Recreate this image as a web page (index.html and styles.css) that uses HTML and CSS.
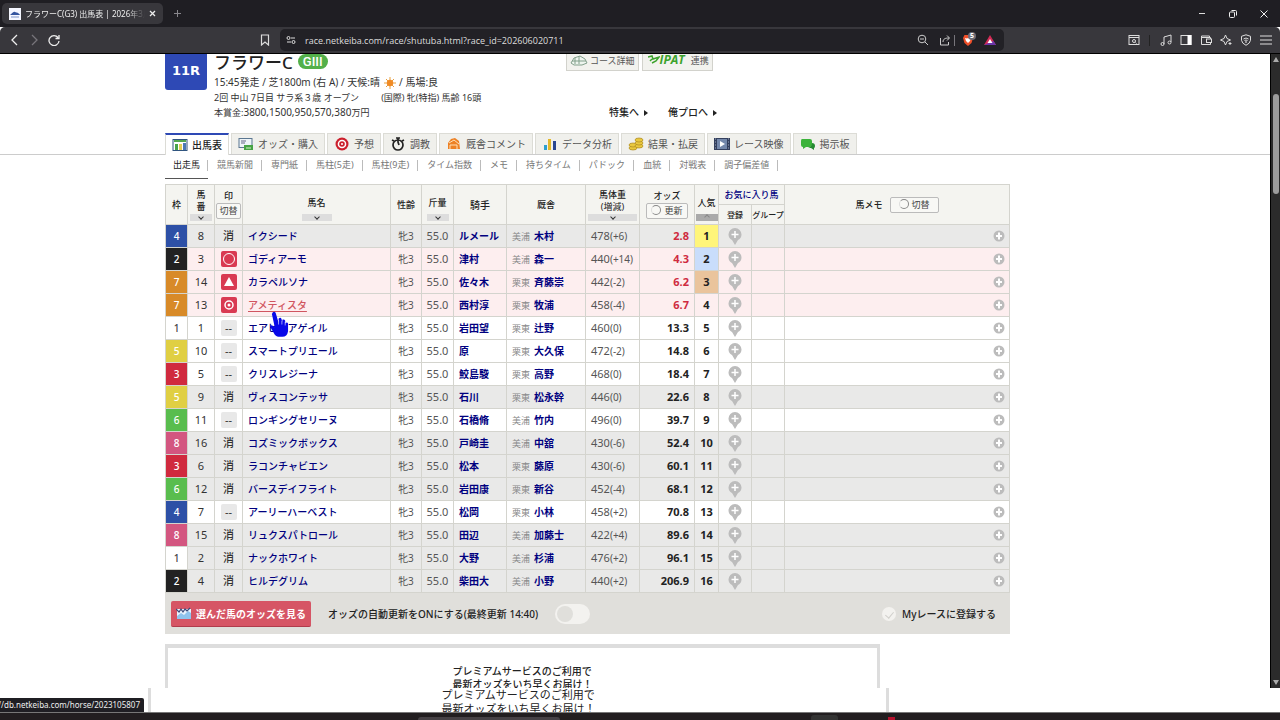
FILE: index.html
```html
<!DOCTYPE html>
<html lang="ja">
<head>
    <meta charset="utf-8">
    <title>フラワーC(G3) 出馬表 | 2026年3月</title>
    <link rel="stylesheet" href="styles.css">
</head>
<body>
    <!-- the browser tab strip -->
    <div class="tabstrip">
        <div class="tab">
            <svg class="favicon" viewBox="0 0 12 12"><rect width="12" height="12" fill="#f4f6ff"/><path d="M1 7c2-1 3-4 5-3s3 0 5 3z" fill="#33549f"/><path d="M2 9h8" stroke="#7d93c7"/></svg>
            <span class="tab-title">フラワーC(G3) 出馬表 | 2026年3月</span>
            <button class="plain" aria-label="閉じる"><svg width="7" height="7" viewBox="0 0 7 7"><path d="M1 1l5 5M6 1L1 6" stroke="#eee" stroke-width="1.3"/></svg></button>
        </div>
        <button class="plain new-tab" aria-label="新しいタブ"><svg width="9" height="9" viewBox="0 0 9 9"><path d="M4.5 1v7M1 4.5h7" stroke="#88868c"/></svg></button>
        <div class="window-buttons">
            <button class="plain" aria-label="最小化"><svg width="10" height="10" viewBox="0 0 10 10"><path d="M2 4.500h6" stroke="#ddd"/></svg></button>
            <button class="plain" aria-label="元に戻す"><svg width="10" height="10" viewBox="0 0 10 10" fill="none" stroke="#eee"><rect x="1.5" y="3" width="5" height="5.5" rx="1"/><path d="M3.5 1.5h4q1 0 1 1v4"/></svg></button>
            <button class="plain" aria-label="ウィンドウを閉じる"><svg width="10" height="10" viewBox="0 0 10 10"><path d="M1.500 1.500l7 7M8.500 1.500l-7 7" stroke="#eee"/></svg></button>
        </div>
    </div>

    <!-- the toolbar -->
    <div class="toolbar">
        <div class="nav-buttons">
            <button class="plain" aria-label="戻る"><svg width="12" height="12" viewBox="0 0 12 12" fill="none" stroke="#eee" stroke-width="1.3"><path d="M9 1L4 6l5 5"/></svg></button>
            <button class="plain" aria-label="進む"><svg width="12" height="12" viewBox="0 0 12 12" fill="none" stroke="#77757b" stroke-width="1.3"><path d="M4 1l5 5-5 5"/></svg></button>
            <button class="plain" aria-label="再読み込み"><svg width="12" height="12" viewBox="0 0 12 12" fill="none" stroke="#eee" stroke-width="1.3"><path d="M10 3.500A5 5 0 1 0 11 7M11 1v3.500H7.500"/></svg></button>
        </div>
        <button class="plain bookmark" aria-label="ブックマーク"><svg width="10" height="12" viewBox="0 0 10 12" fill="none" stroke="#ddd" stroke-width="1.2"><path d="M1.500 1h7v10L5 8l-3.500 3z"/></svg></button>
        <div class="address">
            <svg width="10" height="10" viewBox="0 0 10 10" fill="none" stroke="#ddd"><circle cx="2.500" cy="3" r="1.500"/><path d="M5 3h4M1 7h4"/><circle cx="7.500" cy="7" r="1.500"/></svg>
            <input type="text" class="url" aria-label="アドレス" value="race.netkeiba.com/race/shutuba.html?race_id=202606020711">
            <svg width="12" height="12" viewBox="0 0 12 12" fill="none" stroke="#ccc"><circle cx="5" cy="5" r="3.800"/><path d="M3 5h4M8 8l3 3"/></svg>
            <svg class="share" width="12" height="12" viewBox="0 0 12 12" fill="none" stroke="#ccc"><path d="M1.500 4v7h8V8M4 8c0-3 2-4 6-4M8 1.500L10.500 4 8 6.500"/></svg>
            <span class="divider"></span>
            <span class="shield">
                <svg width="12" height="12" viewBox="0 0 12 12"><path d="M2.500 1h7l1.500 3-1.500 5L6 12 2.500 9 1 4z" fill="#f0502a"/><path d="M3 4l2 .5L6 4l1 .5L9 4 8 7 6 9 4 7z" fill="#fff"/></svg>
                <span class="badge">5</span>
            </span>
            <svg width="12" height="10" viewBox="0 0 12 10"><path d="M6 0l6 10H0z" fill="#d12a55"/><path d="M0 10h12L9.500 6z" fill="#6a35a8"/><path d="M6 4l2.500 4h-5z" fill="#fff"/></svg>
        </div>
        <div class="tool-icons">
            <svg width="12" height="12" viewBox="0 0 12 12" fill="none" stroke="#ddd"><rect x="1" y="1.500" width="10" height="9"/><path d="M1 3.500h10M7.500 8.500l1 1"/><circle cx="6" cy="7" r="1.500"/></svg>
            <span class="divider dark"></span>
            <svg width="12" height="12" viewBox="0 0 12 12" fill="none" stroke="#ddd"><path d="M4 10V3l7-2v7"/><circle cx="2.500" cy="10" r="1.500"/><circle cx="9.500" cy="8.500" r="1.500"/></svg>
            <svg width="12" height="12" viewBox="0 0 12 12"><rect x="1" y="1.500" width="10" height="9" fill="none" stroke="#ddd"/><path d="M7.500 1h4v10h-4z" fill="#fff"/></svg>
            <svg width="12" height="12" viewBox="0 0 12 12" fill="none" stroke="#ddd"><path d="M10.500 5V3.500h-9V2h8v1.500M1.500 3v7.500h9V9"/><rect x="6.500" y="5" width="5" height="3.500"/></svg>
            <svg width="12" height="12" viewBox="0 0 12 12" fill="none" stroke="#ddd"><path d="M5.500 1L7 4.500 10.500 6 7 7.500 5.500 11 4 7.500.5 6 4 4.500zM10 8v3M8.500 9.500h3"/></svg>
            <svg width="12" height="12" viewBox="0 0 12 12" fill="none" stroke="#ddd"><path d="M6 .8l4.500 1.500v4Q10 9.500 6 11.300 2 9.500 1.500 6.300v-4z"/><path d="M3.500 5q2.500-2 5 0M4.500 6.500q1.500-1 3 0"/><circle cx="6" cy="8" r=".5"/></svg>
            <svg width="12" height="12" viewBox="0 0 12 12" stroke="#ddd" stroke-width="1.200"><path d="M0 2h12M0 6h12M0 10h12"/></svg>
        </div>
    </div>

    <!-- the web page -->
    <div class="viewport">
        <main class="page">
            <header class="race-head content">
                <div class="race-no">11R</div>
                <div class="race-info">
                    <h1>フラワーC<span class="grade">GIII</span></h1>
                    <p class="race-data">15:45発走 / 芝1800m (右 A) / 天候:晴
                        <svg width="12" height="12" viewBox="0 0 12 12"><path d="M6 0v12M0 6h12M2 2l8 8M10 2l-8 8" stroke="#e8a040"/><circle cx="6" cy="6" r="3.200" fill="#f08a24"/></svg>
                        / 馬場:良</p>
                    <p><span class="class-name">2回 中山 7日目 サラ系３歳 オープン</span><span>(国際) 牝(特指) 馬齢 16頭</span></p>
                    <p>本賞金:<span class="prize">3800,1500,950,570,380</span>万円</p>
                </div>
                <div class="race-links">
                    <div class="link-buttons">
                        <button><svg width="18" height="11" viewBox="0 0 18 11" fill="#eef5ef" stroke="#829f8b"><path d="M1 8l3-5 6-2 5 3 2 4-5 2H4z"/><path d="M5 3v6M9 1v8M2 6h14"/></svg>コース詳細</button>
                        <button><span class="ipat"><svg width="12" height="9" viewBox="0 0 12 9" fill="none" stroke="#3ca32c" stroke-width="1.500"><path d="M0 2l4-1 1 3 6-2-3 4-4 2M4 4L2 6"/></svg>IPAT</span>連携</button>
                    </div>
                    <div class="feature-links">
                        <a href="#">特集へ</a>
                        <a href="#">俺プロへ</a>
                    </div>
                </div>
            </header>

            <nav class="main-tabs">
                <a href="#" class="active"><svg viewBox="0 0 16 14"><rect x="1" y="1.500" width="14" height="11" fill="#fff" stroke="#30557f"/><path d="M2 2h12v2H2z" fill="#54a84f"/><path d="M3 6h3v6H3z" fill="#49a34a"/><path d="M7 6h3v6H7z" fill="#e4cf56"/><path d="M11 5h3v7h-3z" fill="#4d7ab5"/></svg>出馬表</a>
                <a href="#"><svg viewBox="0 0 16 14"><rect x="1" y="1.500" width="13" height="9" fill="#eef4f8" stroke="#5b7791"/><path d="M3 4h5M3 6h4" stroke="#668"/><path d="M6 8h9v5H6z" fill="#47a345"/><path d="M8 11h5" stroke="#d8f3c8"/></svg>オッズ・購入</a>
                <a href="#"><svg viewBox="0 0 16 14"><circle cx="8" cy="7" r="6.500" fill="#cc202d"/><circle cx="8" cy="7" r="4.300" fill="#fff"/><circle cx="8" cy="7" r="2.800" fill="#cc202d"/><circle cx="8" cy="7" r="1" fill="#fff"/></svg>予想</a>
                <a href="#"><svg viewBox="0 0 16 14" fill="none" stroke="#222" stroke-width="1.700"><circle cx="8" cy="8" r="5"/><path d="M8 1v4l1 3M6 1h4M2 3l2 1M14 3l-2 1"/></svg>調教</a>
                <a href="#"><svg viewBox="0 0 16 14"><path d="M2 12V6l3-4 4-1 4 3 1 8z" fill="#ed8125"/><path d="M4 12V8h7v4M3 6l5-3 5 4" fill="none" stroke="#ffe0b8"/></svg>厩舎コメント</a>
                <a href="#"><svg viewBox="0 0 16 14"><path d="M2 8h3v5H2z" fill="#2da0d0"/><path d="M6 2h3v11H6z" fill="#e3b82a"/><path d="M11 4h3v9h-3z" fill="#294690"/></svg>データ分析</a>
                <a href="#"><svg viewBox="0 0 16 14" fill="#e9c83e" stroke="#aa861e" stroke-width=".7"><ellipse cx="5" cy="11" rx="4" ry="2"/><ellipse cx="5" cy="8" rx="4" ry="2"/><ellipse cx="11" cy="9" rx="4" ry="2"/><ellipse cx="11" cy="6" rx="4" ry="2"/><ellipse cx="11" cy="3" rx="4" ry="2"/></svg>結果・払戻</a>
                <a href="#"><svg viewBox="0 0 16 14"><path d="M0 1h16v12H0z" fill="#34405e"/><path d="M3 2h10v10H3z" fill="#7488ab"/><path d="M6 4l5 3-5 3z" fill="#fff"/><path d="M1.500 1v12M14.500 1v12" stroke="#68738c" stroke-dasharray="2 1"/></svg>レース映像</a>
                <a href="#"><svg viewBox="0 0 16 14"><path d="M2 2h8q2 0 2 2v4q0 2-2 2H6l-3 2V10Q1 10 1 8V4q0-2 1-2z" fill="#3cb33b"/><path d="M12 6q3 0 3 3 0 2-1 2v2l-3-2H8q4-1 4-5z" fill="#268b32"/></svg>掲示板</a>
            </nav>
            <nav class="sub-tabs">
                <a href="#" class="active">出走馬</a>
                <a href="#">競馬新聞</a>
                <a href="#">専門紙</a>
                <a href="#">馬柱(5走)</a>
                <a href="#">馬柱(9走)</a>
                <a href="#">タイム指数</a>
                <a href="#">メモ</a>
                <a href="#">持ちタイム</a>
                <a href="#">パドック</a>
                <a href="#">血統</a>
                <a href="#">対戦表</a>
                <a href="#">調子偏差値</a>
            </nav>

            <section class="content">
                <table class="shutuba">
                    <colgroup>
                        <col class="c-waku"><col class="c-umaban"><col class="c-mark"><col class="c-name">
                        <col class="c-age"><col class="c-kinryo"><col class="c-jockey"><col class="c-stable">
                        <col class="c-weight"><col class="c-odds"><col class="c-rank"><col class="c-fav">
                        <col class="c-group"><col class="c-memo">
                    </colgroup>
                    <thead>
                        <tr>
                            <th rowspan="2">枠</th>
                            <th rowspan="2"><div class="head">馬<br>番<button class="sort" aria-label="馬番順"></button></div></th>
                            <th rowspan="2">印<br><button class="small-button">切替</button></th>
                            <th rowspan="2"><div class="head one">馬名<button class="sort wide" aria-label="馬名順"></button></div></th>
                            <th rowspan="2">性齢</th>
                            <th rowspan="2"><div class="head one">斤量<button class="sort" aria-label="斤量順"></button></div></th>
                            <th rowspan="2" class="large">騎手</th>
                            <th rowspan="2">厩舎</th>
                            <th rowspan="2"><div class="head">馬体重<br><span class="light">(増減)</span><button class="sort full" aria-label="馬体重順"></button></div></th>
                            <th rowspan="2">オッズ<br><button class="small-button refresh">更新</button></th>
                            <th rowspan="2"><div class="head one">人気<button class="sort on" aria-label="人気順"></button></div></th>
                            <th colspan="2"><a href="#">お気に入り馬</a></th>
                            <th rowspan="2"><div class="memo-head">馬メモ <button class="small-button refresh">切替</button></div></th>
                        </tr>
                        <tr>
                            <th class="tiny">登録</th>
                            <th class="tiny">グループ</th>
                        </tr>
                    </thead>
                    <tbody id="horses"></tbody>
                </table>

                <div class="table-foot">
                    <button class="odds-button">
                        <svg width="16" height="12" viewBox="0 0 16 12"><path d="M1 2h14v10H1z" fill="#e9f4ff"/><path d="M1 9l4-3 3 2 4-4 3 2v6H1z" fill="#8fc4ee"/><path d="M0 2l3 3 2-3 2 3 2-3 2 2 3-3" fill="none" stroke="#3d4c7c" stroke-width="1.200"/></svg>
                        選んだ馬のオッズを見る
                    </button>
                    <label class="auto-update">オッズの自動更新をONにする(最終更新 14:40)<input type="checkbox" class="switch"></label>
                    <label class="my-race"><input type="checkbox" class="round-check">Myレースに登録する</label>
                </div>

                <div class="premium">
                    <p>プレミアムサービスのご利用で<br>最新オッズをいち早くお届け！</p>
                </div>
            </section>
        </main>
        <div class="scrollbar">
            <span class="arrow up"></span>
            <span class="thumb"></span>
            <span class="arrow down"></span>
        </div>
    </div>

    <!-- the window behind -->
    <div class="behind">
        <div class="premium">
            <p>プレミアムサービスのご利用で<br>最新オッズをいち早くお届け！</p>
        </div>
    </div>
    <div class="taskbar"><span class="task"></span><span class="task short"></span><span class="alert"></span></div>

    <div class="status">s://db.netkeiba.com/horse/2023105807</div>
    <svg class="cursor" viewBox="0 0 20 28"><path d="M3 1q2-1 3 1l3 10V8q2-2 3 0l1 3V9q2-1 3 1v3q2-2 3 0v8q-1 6-6 6H9q-3 0-5-4l-4-7q1-3 5 1L2 3z" fill="#0808e8"/><path d="M9 9v5M12.500 10v4M16 11v4" stroke="#e8e8ff" stroke-width=".7"/></svg>

    <script src="shutuba.js"></script>
</body>
</html>
```
FILE: styles.css
```css
/* This is the style of the body element */
* {
    box-sizing: border-box;
}
body {
    margin: 0;
    height: 100vh;
    display: flex;
    flex-direction: column;
    overflow: hidden;
    background: white;
    color: #333;
    font-family: "Noto Sans", "Noto Sans CJK JP", sans-serif;
    font-size: 10px;
}
h1, p {
    margin: 0;
}
a {
    color: #00007f;
    text-decoration: none;
}
button, input {
    font-family: inherit;
    margin: 0;
}
.plain {
    display: flex;
    background: none;
    border: none;
    padding: 0;
}

/* Set up the style for the tab strip */
.tabstrip {
    flex: none;
    display: flex;
    align-items: center;
    height: 27px;
    padding: 0 11px 0 2px;
    background: #1f1e23;
}
.tab {
    display: flex;
    align-items: center;
    gap: 4px;
    width: 161px;
    height: 21px;
    padding: 0 7px;
    border-radius: 5px;
    background: #38373c;
    color: #eee;
}
.favicon {
    flex: none;
    width: 12px;
    height: 12px;
}
.tab-title {
    flex: 1;
    font-size: 8px;
    white-space: nowrap;
    overflow: hidden;
    -webkit-mask-image: linear-gradient(to right, black 85%, transparent);
}
.new-tab {
    margin-left: 10px;
}
.window-buttons {
    display: flex;
    gap: 21px;
    margin-left: auto;
}

/* Set up the style for the toolbar */
.toolbar {
    flex: none;
    display: flex;
    align-items: center;
    height: 27px;
    padding: 0 8px;
    background: #38373c;
    border-bottom: 1px solid black;
    border-radius: 5px 5px 0 0;
}
.nav-buttons {
    display: flex;
    gap: 8px;
}
.bookmark {
    margin-left: 200px;
}
.address {
    flex: 1;
    display: flex;
    align-items: center;
    height: 22px;
    margin-left: 10px;
    padding: 0 8px 0 6px;
    border-radius: 5px;
    background: #222126;
}
.url {
    flex: 1;
    margin-left: 9px;
    padding: 0;
    border: none;
    background: none;
    color: #ddd;
    font-family: "Open Sans", "Noto Sans", sans-serif;
    font-size: 9px;
}
.share {
    margin-left: 10px;
}
.divider {
    width: 1px;
    height: 11px;
    margin: 0 7px 0 3px;
    background: #77757b;
}
.divider.dark {
    margin: 0 2px 0 1px;
    background: #222;
}
.shield {
    display: flex;
    position: relative;
    margin-right: 10px;
}
.badge {
    position: absolute;
    left: 6px;
    top: -2px;
    width: 8px;
    border-radius: 4px;
    background: #6e6c75;
    color: white;
    font-size: 7px;
    font-weight: bold;
    line-height: 8px;
    text-align: center;
}
.tool-icons {
    display: flex;
    align-items: center;
    gap: 8px;
    margin-left: 124px;
}

/* Set up the style for the page area */
.viewport {
    flex: 1;
    min-height: 0;
    display: flex;
}
.page {
    flex: 1;
    overflow: hidden;
    white-space: nowrap;
}
.content {
    padding: 0 260px 0 165px;
}
.race-head {
    display: flex;
    height: 79px;
}
.race-no {
    width: 42px;
    height: 36px;
    border-radius: 0 0 3px 3px;
    background: #2e49b5;
    color: white;
    font-family: "DejaVu Sans", sans-serif;
    font-size: 13px;
    font-weight: bold;
    line-height: 34px;
    text-align: center;
}
.race-info {
    width: 352px;
    margin-left: 7px;
    line-height: 14px;
}
.race-info h1 {
    height: 20px;
    color: #222;
    font-size: 17px;
    font-weight: 500;
    line-height: 18px;
}
.grade {
    display: inline-block;
    margin-left: 5px;
    padding: 0 5px;
    border-radius: 8px;
    background: #53b04a;
    color: white;
    font-family: Roboto, sans-serif;
    font-size: 13px;
    line-height: 15px;
    vertical-align: top;
}
.race-info p {
    font-size: 9px;
}
.race-info .race-data {
    height: 17px;
    font-size: 10px;
    line-height: 16px;
}
.race-data svg {
    margin: 0 1px;
    vertical-align: middle;
}
.class-name {
    margin-right: 22px;
}
.prize {
    font-size: 10px;
}
.link-buttons {
    display: flex;
    gap: 3px;
}
.link-buttons button {
    display: flex;
    align-items: center;
    gap: 2px;
    height: 17px;
    padding: 0 3px 4px;
    border: 1px solid #d2d2cc;
    border-top: none;
    background: #f2f2ee;
    color: #555;
    font-size: 9px;
}
.ipat {
    display: flex;
    margin: 0 4px 0 2px;
    color: #3ca32c;
    font-family: "Open Sans", sans-serif;
    font-size: 12px;
    font-style: italic;
    font-weight: bold;
    line-height: 10px;
}
.feature-links {
    display: flex;
    gap: 20px;
    margin: 33px 0 0 43px;
}
.feature-links a {
    color: #222;
    font-weight: 500;
}
.feature-links a::after {
    content: "";
    display: inline-block;
    margin-left: 5px;
    border: 3px solid transparent;
    border-left: 4px solid #222;
    border-right: none;
}

/* Set up the style for the tabs */
.main-tabs {
    display: flex;
    gap: 2px;
    height: 22px;
    padding-left: 165px;
    border-bottom: 1px solid #ccc;
}
.main-tabs a {
    display: flex;
    align-items: center;
    gap: 4px;
    padding: 0 6px 1px;
    border: 1px solid #dcdcd6;
    border-bottom: none;
    background: #f0f0ec;
    color: #555;
}
.main-tabs svg {
    width: 16px;
    height: 14px;
}
.main-tabs .active {
    height: 22px;
    border-top: 2px solid #2e49b5;
    background: white;
    color: #222;
    font-weight: 500;
}
.sub-tabs {
    display: flex;
    height: 29px;
    padding-left: 165px;
}
.sub-tabs a {
    height: 24px;
    line-height: 20px;
    padding: 0 9px;
    color: #777;
    font-size: 9px;
    background: linear-gradient(#bbb, #bbb) no-repeat right 5px / 1px 11px;
}
.sub-tabs .active {
    padding: 0 8px;
    color: #222;
    border-bottom: 1px solid #555;
}

/* Set up the style for the table */
.shutuba {
    width: 100%;
    table-layout: fixed;
    border-collapse: collapse;
}
.c-waku { width: 22px; }
.c-umaban { width: 27px; }
.c-mark { width: 28px; }
.c-name { width: 148px; }
.c-age { width: 31px; }
.c-kinryo { width: 32px; }
.c-jockey { width: 53px; }
.c-stable { width: 79px; }
.c-weight { width: 54px; }
.c-odds { width: 55px; }
.c-rank { width: 24px; }
.c-fav { width: 33px; }
.c-group { width: 33px; }
.shutuba th, .shutuba td {
    padding: 0;
    border: 1px solid #d4d4ce;
    overflow: hidden;
}
.shutuba th {
    height: 20px;
    background: #f4f4f0;
    color: #222;
    font-size: 9px;
    font-weight: 500;
    line-height: 12px;
}
.shutuba .large {
    font-size: 10px;
}
.shutuba .tiny {
    font-size: 8px;
}
.light {
    font-weight: normal;
}
.head {
    display: flow-root;
    height: 39px;
    padding-top: 4px;
}
.one {
    padding-top: 12px;
}
.sort {
    display: block;
    width: 22px;
    height: 7px;
    margin: 1px auto 0;
    padding: 0 0 2px;
    border: none;
    background: #ddd;
}
.one .sort {
    margin-top: 5px;
}
.sort::before {
    content: "";
    display: block;
    width: 3px;
    height: 3px;
    margin: 0 auto;
    border: solid #333;
    border-width: 0 1px 1px 0;
    rotate: 45deg;
}
.wide {
    width: 30px;
}
.full {
    width: 49px;
}
.sort.on {
    background: #aaa;
}
.sort.on::before {
    border-color: #888;
    border-width: 1px 0 0 1px;
}
.small-button {
    height: 16px;
    margin-top: 1px;
    padding: 0 2px;
    border: 1px solid #bbb;
    border-radius: 2px;
    background: #f8f8f5;
    color: #444;
    font-size: 9px;
    line-height: 12px;
}
.refresh {
    padding: 0 4px;
}
.refresh::before {
    content: "";
    display: inline-block;
    width: 8px;
    height: 8px;
    margin-right: 3px;
    border: 1px solid #888;
    border-left-color: #ddd;
    border-radius: 50%;
    vertical-align: -1px;
}
.memo-head {
    display: flex;
    align-items: center;
    justify-content: center;
    gap: 7px;
}
.memo-head .refresh {
    padding: 0 8px;
}
.shutuba td {
    height: 23px;
    font-size: 11px;
    line-height: 16px;
    text-align: center;
}
.pick {
    background: #fdeeef;
}
.off {
    background: #e9e9e8;
}
.shutuba .name, .shutuba .jockey, .shutuba .stable, .shutuba .weight {
    padding-left: 5px;
    text-align: left;
}
.shutuba .name, .shutuba .jockey, .shutuba .stable {
    font-size: 10px;
    font-weight: 500;
}
.shutuba .jockey, .shutuba .stable {
    font-weight: bold;
}
.area {
    margin-right: 4px;
    color: #888;
    font-size: 9px;
    font-weight: normal;
}
.diff {
    font-size: 10px;
}
.shutuba .age {
    color: #555;
    font-size: 10px;
}
.shutuba .kinryo, .shutuba .weight {
    color: #555;
}
.name .hover {
    color: #d05560;
    text-decoration: underline;
    text-underline-offset: 2px;
}
.shutuba .odds {
    padding-right: 5px;
    color: #222;
    font-weight: bold;
    text-align: right;
}
.shutuba .low {
    color: #cf2b3f;
}
.shutuba .rank {
    color: #222;
    font-weight: bold;
}
.rank1 { background: #fff57a; }
.rank2 { background: #c9ddfb; }
.rank3 { background: #eac49c; }

.shutuba .waku {
    color: white;
    font-size: 10px;
    font-weight: 500;
}
.shutuba .waku1 { background: white; color: #444; }
.waku2 { background: #222; }
.waku3 { background: #d02a3e; }
.waku4 { background: #2d50a6; }
.waku5 { background: #e0cf43; }
.waku6 { background: #59bd4e; }
.waku7 { background: #d88a28; }
.waku8 { background: #d35680; }

/* Set up the style for the marks */
.mark {
    display: flex;
    align-items: center;
    justify-content: center;
    width: 16px;
    height: 16px;
    margin: 0 auto;
    padding: 0;
    border: none;
    border-radius: 2px;
    background: #e8e8e8;
    color: #333;
    font-size: 11px;
    line-height: 14px;
}
.chosen {
    background: #d93a52;
}
.erase {
    background: none;
    font-weight: 500;
}
.icon-button {
    display: flex;
    margin: 0 auto;
    padding: 0;
    border: none;
    background: none;
}
.memo .icon-button {
    margin: 0 4px 0 auto;
}

/* Set up the style below the table */
.table-foot {
    display: flex;
    align-items: center;
    height: 41px;
    padding: 0 14px 0 6px;
    background: #e0dfdb;
    color: #222;
    font-weight: 500;
}
.odds-button {
    display: flex;
    align-items: center;
    gap: 4px;
    height: 26px;
    padding: 0 5px;
    border: none;
    border-bottom: 1px solid #b03c4c;
    border-radius: 2px;
    background: #d65565;
    color: white;
    font-size: 10px;
    font-weight: bold;
}
.auto-update {
    display: flex;
    align-items: center;
    gap: 17px;
    margin-left: 17px;
}
.switch {
    appearance: none;
    width: 35px;
    height: 20px;
    padding: 2px;
    border-radius: 10px;
    background: #f3f2ef;
}
.switch::before {
    content: "";
    display: block;
    width: 16px;
    height: 16px;
    border-radius: 50%;
    background: #e0dfdb;
}
.my-race {
    display: flex;
    align-items: center;
    gap: 6px;
    margin-left: auto;
}
.round-check {
    appearance: none;
    width: 14px;
    height: 14px;
    padding: 3px 5px;
    border-radius: 50%;
    background: #f3f2ef;
}
.round-check::before {
    content: "";
    display: block;
    width: 4px;
    height: 7px;
    border: solid #d0cfcb;
    border-width: 0 1px 1px 0;
    rotate: 40deg;
}
.premium {
    width: 715px;
    max-width: 100%;
    margin-top: 10px;
    padding-top: 17px;
    border: 4px solid #ddd;
    border-width: 4px 3px 0;
    color: #222;
    font-weight: 500;
    line-height: 13px;
}
.premium p {
    width: max-content;
    margin: 0 auto;
}

/* Set up the style for the scrollbar */
.scrollbar {
    display: flex;
    flex-direction: column;
    align-items: center;
    width: 10px;
    padding: 3px 0;
    border-left: 1px solid black;
    background: #2b2b2b;
}
.arrow {
    border: 3px solid transparent;
}
.up {
    border-top: none;
    border-bottom: 5px solid #aaa;
}
.down {
    margin-top: auto;
    border-bottom: none;
    border-top: 5px solid #aaa;
}
.thumb {
    width: 6px;
    height: 100px;
    margin-top: 32px;
    border-radius: 3px;
    background: #9c9c9c;
}

/* Set up the style for the bottom of the screen */
.behind {
    flex: none;
    height: 24px;
    padding-left: 148px;
    overflow: hidden;
}
.behind .premium {
    width: 741px;
    margin: 0;
    padding: 0;
    border-width: 0 3px;
    font-size: 11px;
    font-weight: normal;
    line-height: 14px;
}
.taskbar {
    flex: none;
    display: flex;
    align-items: flex-end;
    height: 8px;
    padding-left: 418px;
    border-top: 1px solid #777;
    background: #221e20;
}
.task {
    width: 142px;
    height: 3px;
    border-radius: 3px 3px 0 0;
    background: #464145;
}
.short {
    width: 27px;
    height: 5px;
    margin-left: 251px;
    background: #333;
}
.alert {
    width: 7px;
    height: 3px;
    margin-left: 50px;
    background: #b5122e;
}
.status {
    position: absolute;
    left: 0;
    bottom: 8px;
    width: 144px;
    height: 14px;
    border-radius: 0 2px 0 0;
    background: #1f1e23;
    color: #eee;
    font-size: 8px;
    line-height: 14px;
    white-space: nowrap;
    overflow: hidden;
    display: flex;
    justify-content: flex-end;
    padding-right: 4px;
}
.cursor {
    position: absolute;
    left: 270px;
    top: 311px;
    width: 19px;
    height: 27px;
}
```
FILE: shutuba.js
```js
// waku, umaban, mark, name, jockey, area, stable, weight, diff, odds
const horses = [
    [4, 8, "消", "イクシード", "ルメール", "美浦", "木村", 478, "+6", "2.8"],
    [2, 3, "○", "ゴディアーモ", "津村", "美浦", "森一", 440, "+14", "4.3"],
    [7, 14, "▲", "カラペルソナ", "佐々木", "栗東", "斉藤崇", 442, "-2", "6.2"],
    [7, 13, "◎", "アメティスタ", "西村淳", "栗東", "牧浦", 458, "-4", "6.7"],
    [1, 1, "--", "エアビーアゲイル", "岩田望", "栗東", "辻野", 460, "0", "13.3"],
    [5, 10, "--", "スマートプリエール", "原", "栗東", "大久保", 472, "-2", "14.8"],
    [3, 5, "--", "クリスレジーナ", "鮫島駿", "栗東", "高野", 468, "0", "18.4"],
    [5, 9, "消", "ヴィスコンテッサ", "石川", "栗東", "松永幹", 446, "0", "22.6"],
    [6, 11, "--", "ロンギングセリーヌ", "石橋脩", "美浦", "竹内", 496, "0", "39.7"],
    [8, 16, "消", "コズミックボックス", "戸崎圭", "美浦", "中舘", 430, "-6", "52.4"],
    [3, 6, "消", "ラコンチャビエン", "松本", "栗東", "藤原", 430, "-6", "60.1"],
    [6, 12, "消", "バースデイフライト", "岩田康", "栗東", "新谷", 452, "-4", "68.1"],
    [4, 7, "--", "アーリーハーベスト", "松岡", "栗東", "小林", 458, "+2", "70.8"],
    [8, 15, "消", "リュクスパトロール", "田辺", "美浦", "加藤士", 422, "+4", "89.6"],
    [1, 2, "消", "ナックホワイト", "大野", "美浦", "杉浦", 476, "+2", "96.1"],
    [2, 4, "消", "ヒルデグリム", "柴田大", "美浦", "小野", 440, "+2", "206.9"]
];

// The shapes drawn inside the red marks
const shapes = {
    "○": '<circle cx="8" cy="8" r="5.500" fill="none" stroke="#fff"/>',
    "▲": '<path d="M8 3l5 9H3z" fill="#fff"/>',
    "◎": '<circle cx="8" cy="8" r="4" fill="none" stroke="#fff" stroke-width="1.500"/><circle cx="8" cy="8" r="1.500" fill="#fff"/>'
};

function markButton(mark) {
    if (shapes[mark]) {
        return `<button class="mark chosen" aria-label="${mark}"><svg width="16" height="16" viewBox="0 0 16 16">${shapes[mark]}</svg></button>`;
    }
    return `<button class="mark ${mark == "消" ? "erase" : ""}">${mark}</button>`;
}

const pin = '<button class="icon-button" aria-label="登録"><svg width="14" height="17" viewBox="0 0 14 17"><path d="M7 0a6.500 6.500 0 0 1 6.500 6.500Q13.500 10 10 12L7 17l-3-5Q.5 10 .5 6.500A6.500 6.500 0 0 1 7 0z" fill="#bcbcbc"/><path d="M7 3v7M3.500 6.500h7" stroke="#fff" stroke-width="1.500"/></svg></button>';
const plus = '<button class="icon-button" aria-label="メモ"><svg width="12" height="12" viewBox="0 0 12 12"><circle cx="6" cy="6" r="5.500" fill="#bcbcbc"/><path d="M6 2.500v7M3 6h6" stroke="#fff" stroke-width="2"/></svg></button>';

let html = "";
horses.forEach(function (h, i) {
    let [waku, umaban, mark, name, jockey, area, stable, weight, diff, odds] = h;
    let rank = i + 1;
    let state = mark == "消" ? "off" : (shapes[mark] ? "pick" : "");
    html += `<tr class="${state}">
        <td class="waku waku${waku}">${waku}</td>
        <td>${umaban}</td>
        <td>${markButton(mark)}</td>
        <td class="name"><a href="#" class="${mark == "◎" ? "hover" : ""}">${name}</a></td>
        <td class="age">牝3</td>
        <td class="kinryo">55.0</td>
        <td class="jockey"><a href="#">${jockey}</a></td>
        <td class="stable"><span class="area">${area}</span><a href="#">${stable}</a></td>
        <td class="weight">${weight}<span class="diff">(${diff})</span></td>
        <td class="odds ${odds < 10 ? "low" : ""}">${odds}</td>
        <td class="rank rank${rank}">${rank}</td>
        <td>${pin}</td>
        <td></td>
        <td class="memo">${plus}</td>
    </tr>`;
});
document.getElementById("horses").innerHTML = html;
```
